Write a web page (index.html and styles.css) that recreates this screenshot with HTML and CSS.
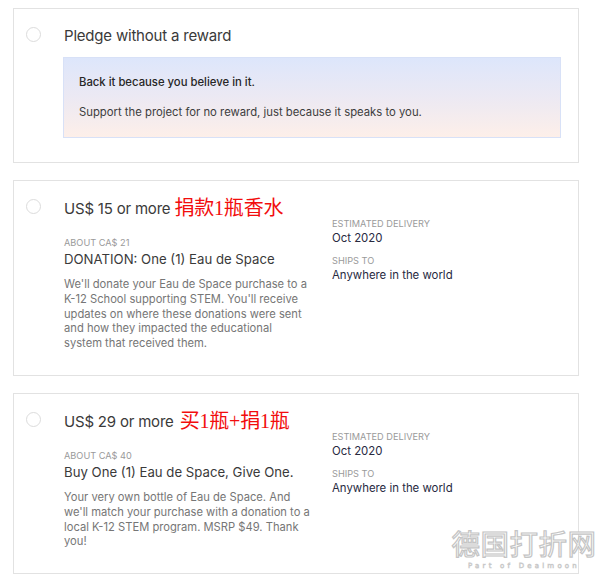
FILE: index.html
```html
<!DOCTYPE html>
<html lang="en">
<head>
<meta charset="utf-8">
<title>Rewards</title>
<link rel="stylesheet" href="styles.css">
</head>
<body>
<main class="list">
  <section class="card card-noreward">
    <span class="radio"></span>
    <div class="content">
      <h2 class="title">Pledge without a reward</h2>
      <div class="promo">
        <p class="promo-head">Back it because you believe in it.</p>
        <p class="promo-text">Support the project for no reward, just because it speaks to you.</p>
      </div>
    </div>
  </section>

  <section class="card">
    <span class="radio"></span>
    <div class="content">
      <h2 class="title">US$ 15 or more <span class="note">捐款1瓶香水</span></h2>
      <div class="details">
        <div class="main">
          <p class="about">About CA$ 21</p>
          <h3 class="name">DONATION: One (1) Eau de Space</h3>
          <p class="desc">We'll donate your Eau de Space purchase to a K-12 School supporting STEM. You'll receive updates on where these donations were sent and how they impacted the educational system that received them.</p>
        </div>
        <div class="side">
          <p class="label">Estimated delivery</p>
          <p class="value">Oct 2020</p>
          <p class="label label-gap">Ships to</p>
          <p class="value">Anywhere in the world</p>
        </div>
      </div>
    </div>
  </section>

  <section class="card">
    <span class="radio"></span>
    <div class="content">
      <h2 class="title">US$ 29 or more <span class="note note-wide">买1瓶+捐1瓶</span></h2>
      <div class="details">
        <div class="main">
          <p class="about">About CA$ 40</p>
          <h3 class="name">Buy One (1) Eau de Space, Give One.</h3>
          <p class="desc">Your very own bottle of Eau de Space. And we'll match your purchase with a donation to a local K-12 STEM program. MSRP $49. Thank you!</p>
        </div>
        <div class="side">
          <p class="label">Estimated delivery</p>
          <p class="value">Oct 2020</p>
          <p class="label label-gap">Ships to</p>
          <p class="value">Anywhere in the world</p>
        </div>
      </div>
    </div>
  </section>
</main>
<div class="watermark">
  <div class="wm-cn">德国打折网</div>
  <div class="wm-en">Part of Dealmoon</div>
</div>
</body>
</html>
```

FILE: styles.css
```css
* { box-sizing: border-box; }
html, body { margin: 0; padding: 0; background: #fff; }
body {
  font-family: Inter, "Noto Sans", "Noto Sans CJK SC", sans-serif;
  color: #3a3a3a;
  width: 600px;
  height: 581px;
  overflow: hidden;
  position: relative;
}
p, h2, h3 { margin: 0; font-weight: normal; }

.list {
  padding: 8px 0 0 13px;
  display: flex;
  flex-direction: column;
  gap: 17px;
}

.card {
  width: 566px;
  border: 1px solid #e2e2e2;
  background: #fff;
  display: flex;
  align-items: flex-start;
  padding: 17px 17px 24px 12px;
}
.card-noreward { padding-bottom: 24px; padding-top: 17px; }

.radio {
  flex: none;
  width: 15px;
  height: 15px;
  border: 1px solid #dcdcdc;
  border-radius: 50%;
  margin-top: 1px;
  margin-right: 23px;
}

.content { flex: 1; }

.title {
  font-size: 15px;
  line-height: 20px;
  height: 20px;
  color: #3a3a3a;
  letter-spacing: -0.2px;
}
.note {
  font-family: "Liberation Serif", "Noto Sans CJK SC", serif;
  color: #f20d0d;
  font-size: 20px;
  line-height: 1;
  margin-left: 0;
  vertical-align: -1px;
}
.note-wide { margin-left: 2px; }

.promo {
  margin-top: 11px;
  width: 498px;
  margin-left: -1px;
  border: 1px solid #d8e1f7;
  background: linear-gradient(to bottom, #dde6fb 0%, #ece9f3 50%, #fdefe9 100%);
  padding: 16px 15px 17px;
}
.promo-head {
  font-size: 11.3px;
  line-height: 16px;
  font-weight: 500;
  color: #262626;
}
.promo-text {
  font-size: 11.3px;
  line-height: 16px;
  margin-top: 14px;
  color: #3d3d3d;
}

.details {
  display: flex;
  gap: 22px;
}
.main {
  width: 246px;
  margin-top: 19px;
}
.about {
  font-size: 9.2px;
  line-height: 12px;
  text-transform: uppercase;
  color: #9a9a9a;
}
.name {
  font-size: 13.2px;
  line-height: 18px;
  margin-top: 1px;
  color: #3a3a3a;
}
.desc {
  margin-top: 9px;
  font-size: 11.2px;
  line-height: 14.8px;
  color: #767676;
}

.side { margin-top: 0; }
.label {
  font-size: 9.2px;
  line-height: 12px;
  text-transform: uppercase;
  color: #9a9a9a;
}
.label-gap { margin-top: 9px; }
.value {
  font-size: 11.4px;
  line-height: 16px;
  color: #282a3f;
}

.watermark {
  position: absolute;
  right: 2px;
  bottom: 10px;
  width: 148px;
  text-align: center;
}
.wm-cn {
  font-family: "Noto Sans CJK SC", sans-serif;
  font-size: 28.5px;
  line-height: 30px;
  color: #fff;
  -webkit-text-stroke: 1.2px #c4c4c4;
  letter-spacing: 0.5px;
}
.wm-en {
  margin-top: 4px;
  font-family: "DejaVu Sans", sans-serif;
  font-size: 7px;
  line-height: 9px;
  color: #fff;
  -webkit-text-stroke: 0.6px #c9c9c9;
  letter-spacing: 3.2px;
  white-space: nowrap;
}
```
